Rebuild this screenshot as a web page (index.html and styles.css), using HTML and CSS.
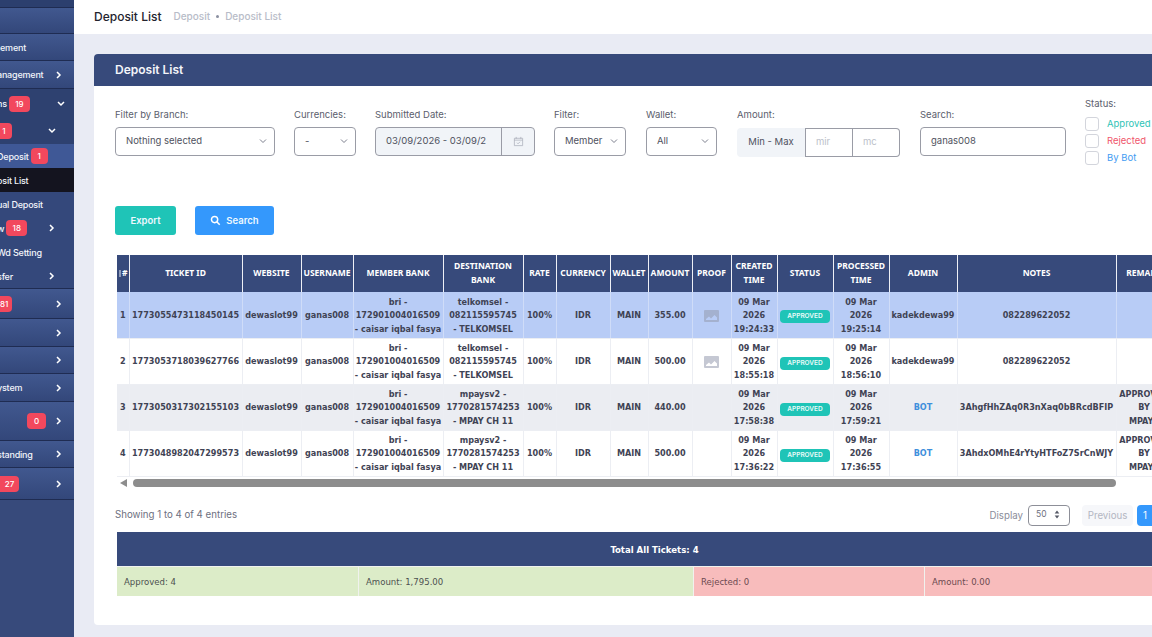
FILE: index.html
```html
<!DOCTYPE html>
<html lang="en">
<head>
<meta charset="utf-8">
<title>Deposit List</title>
<link rel="stylesheet" href="styles.css">
</head>
<body>
<div class="app">
  <aside class="sidebar">
    <div class="nav-cap"></div>
    <a class="nav h26"></a>
    <a class="nav h27"><span class="flush">ement</span></a>
    <a class="nav h28"><span>anagement</span><svg class="chev" viewBox="0 0 8 8"><path d="M2 1l3 3-3 3"/></svg></a>
    <div class="group">
      <a class="nav-sub h29"><span>ns</span><b class="badge">19</b><svg class="chev dn" viewBox="0 0 8 8"><path d="M1 2l3 3 3-3"/></svg></a>
      <a class="nav-sub h26 in"><b class="badge cut">1</b><svg class="chev dn" viewBox="0 0 8 8"><path d="M1 2l3 3 3-3"/></svg></a>
      <a class="nav-sub h24 lit"><span>Deposit</span><b class="badge small">1</b></a>
      <a class="nav-sub h24 black"><span>osit List</span></a>
      <a class="nav-sub h24"><span>ual Deposit</span></a>
      <a class="nav-sub h24 in"><span>w</span><b class="badge">18</b><svg class="chev" viewBox="0 0 8 8"><path d="M2 1l3 3-3 3"/></svg></a>
      <a class="nav-sub h24"><span>Wd Setting</span></a>
      <a class="nav-sub h24 in"><span>sfer</span><svg class="chev" viewBox="0 0 8 8"><path d="M2 1l3 3-3 3"/></svg></a>
    </div>
    <a class="nav h30"><b class="badge cut">81</b><svg class="chev" viewBox="0 0 8 8"><path d="M2 1l3 3-3 3"/></svg></a>
    <a class="nav h28"><svg class="chev" viewBox="0 0 8 8"><path d="M2 1l3 3-3 3"/></svg></a>
    <a class="nav h27"><svg class="chev" viewBox="0 0 8 8"><path d="M2 1l3 3-3 3"/></svg></a>
    <a class="nav h28"><span>ystem</span><svg class="chev" viewBox="0 0 8 8"><path d="M2 1l3 3-3 3"/></svg></a>
    <a class="nav h39"><b class="badge zero">0</b><svg class="chev" viewBox="0 0 8 8"><path d="M2 1l3 3-3 3"/></svg></a>
    <a class="nav h27"><span>standing</span><svg class="chev" viewBox="0 0 8 8"><path d="M2 1l3 3-3 3"/></svg></a>
    <a class="nav h32"><b class="badge cut wide">27</b><svg class="chev" viewBox="0 0 8 8"><path d="M2 1l3 3-3 3"/></svg></a>
    <div class="nav-rest"></div>
  </aside>
  <main class="main">
    <header class="topbar">
      <h1>Deposit List</h1>
      <span class="crumb">Deposit</span><i class="dot"></i><span class="crumb">Deposit List</span>
    </header>
    <section class="card">
      <h2 class="card-head">Deposit List</h2>
      <div class="card-body">
        <div class="filters">
          <div class="field w160">
            <label>Filter by Branch:</label>
            <div class="ctl select"><span>Nothing selected</span><svg class="caret" viewBox="0 0 8 8"><path d="M1 2.5l3 3 3-3"/></svg></div>
          </div>
          <div class="field w62">
            <label>Currencies:</label>
            <div class="ctl select"><span>-</span><svg class="caret" viewBox="0 0 8 8"><path d="M1 2.5l3 3 3-3"/></svg></div>
          </div>
          <div class="field w160">
            <label>Submitted Date:</label>
            <div class="ctl date"><span class="date-val">03/09/2026 - 03/09/2</span><span class="date-ico"><svg viewBox="0 0 12 12"><path d="M1.5 2.5h9v8h-9zM1.5 4.5h9M3.5 1v2M8.5 1v2M4.3 7.3l1.2 1.2 2.2-2.2"/></svg></span></div>
          </div>
          <div class="field w72 wider-gap">
            <label>Filter:</label>
            <div class="ctl select"><span>Member</span><svg class="caret" viewBox="0 0 8 8"><path d="M1 2.5l3 3 3-3"/></svg></div>
          </div>
          <div class="field w71 wider-gap">
            <label>Wallet:</label>
            <div class="ctl select"><span>All</span><svg class="caret" viewBox="0 0 8 8"><path d="M1 2.5l3 3 3-3"/></svg></div>
          </div>
          <div class="field w163 low wider-gap">
            <label>Amount:</label>
            <div class="range"><span class="range-add">Min - Max</span><span class="range-in">mir</span><span class="range-in last">mc</span></div>
          </div>
          <div class="field w146">
            <label>Search:</label>
            <div class="ctl"><span>ganas008</span></div>
          </div>
          <div class="status">
            <label>Status:</label>
            <div class="chk teal"><i></i>Approved</div>
            <div class="chk red"><i></i>Rejected</div>
            <div class="chk blue"><i></i>By Bot</div>
          </div>
        </div>
        <div class="actions">
          <button class="btn export">Export</button>
          <button class="btn search"><svg viewBox="0 0 12 12"><circle cx="5" cy="5" r="3.4"/><path d="M7.6 7.6l3 3"/></svg>Search</button>
        </div>
        <table class="grid">
          <colgroup>
            <col class="c12"><col class="c113"><col class="c59"><col class="c52"><col class="c90"><col class="c80"><col class="c33"><col class="c54"><col class="c38"><col class="c44"><col class="c39"><col class="c46"><col class="c56"><col class="c56"><col class="c68"><col class="c159"><col class="c56">
          </colgroup>
          <thead>
            <tr><th class="idx"><i class="sort"></i>#</th><th>TICKET ID</th><th>WEBSITE</th><th>USERNAME</th><th>MEMBER BANK</th><th>DESTINATION BANK</th><th>RATE</th><th>CURRENCY</th><th>WALLET</th><th>AMOUNT</th><th>PROOF</th><th>CREATED TIME</th><th>STATUS</th><th>PROCESSED TIME</th><th>ADMIN</th><th>NOTES</th><th>REMARK</th></tr>
          </thead>
          <tbody>
            <tr class="sel">
              <td>1</td><td>1773055473118450145</td><td>dewaslot99</td><td>ganas008</td><td>bri - 172901004016509 - caisar iqbal fasya</td><td>telkomsel -<br>082115595745<br>- TELKOMSEL</td><td>100%</td><td>IDR</td><td>MAIN</td><td>355.00</td>
              <td><svg class="pic" viewBox="0 0 15 12"><path d="M1 0h13a1 1 0 0 1 1 1v10a1 1 0 0 1-1 1H1a1 1 0 0 1-1-1V1a1 1 0 0 1 1-1zM2 10h11V7.500L10.500 5 7 8.500 5 6.500 2 9z"/><circle cx="4" cy="3.500" r="1.300"/></svg></td>
              <td>09 Mar 2026 19:24:33</td><td><span class="pill">APPROVED</span></td><td>09 Mar 2026 19:25:14</td><td>kadekdewa99</td><td>082289622052</td><td></td>
            </tr>
            <tr>
              <td>2</td><td>1773053718039627766</td><td>dewaslot99</td><td>ganas008</td><td>bri - 172901004016509 - caisar iqbal fasya</td><td>telkomsel -<br>082115595745<br>- TELKOMSEL</td><td>100%</td><td>IDR</td><td>MAIN</td><td>500.00</td>
              <td><svg class="pic" viewBox="0 0 15 12"><path d="M1 0h13a1 1 0 0 1 1 1v10a1 1 0 0 1-1 1H1a1 1 0 0 1-1-1V1a1 1 0 0 1 1-1zM2 10h11V7.500L10.500 5 7 8.500 5 6.500 2 9z"/><circle cx="4" cy="3.500" r="1.300"/></svg></td>
              <td>09 Mar 2026 18:55:18</td><td><span class="pill">APPROVED</span></td><td>09 Mar 2026 18:56:10</td><td>kadekdewa99</td><td>082289622052</td><td></td>
            </tr>
            <tr class="alt">
              <td>3</td><td>1773050317302155103</td><td>dewaslot99</td><td>ganas008</td><td>bri - 172901004016509 - caisar iqbal fasya</td><td>mpaysv2 -<br>1770281574253<br>- MPAY CH 11</td><td>100%</td><td>IDR</td><td>MAIN</td><td>440.00</td>
              <td></td>
              <td>09 Mar 2026 17:58:38</td><td><span class="pill">APPROVED</span></td><td>09 Mar 2026 17:59:21</td><td class="bot">BOT</td><td>3AhgfHhZAq0R3nXaq0bBRcdBFIP</td><td>APPROVED<br>BY<br>MPAY2</td>
            </tr>
            <tr>
              <td>4</td><td>1773048982047299573</td><td>dewaslot99</td><td>ganas008</td><td>bri - 172901004016509 - caisar iqbal fasya</td><td>mpaysv2 -<br>1770281574253<br>- MPAY CH 11</td><td>100%</td><td>IDR</td><td>MAIN</td><td>500.00</td>
              <td></td>
              <td>09 Mar 2026 17:36:22</td><td><span class="pill">APPROVED</span></td><td>09 Mar 2026 17:36:55</td><td class="bot">BOT</td><td>3AhdxOMhE4rYtyHTFoZ7SrCnWJY</td><td>APPROVED<br>BY<br>MPAY2</td>
            </tr>
          </tbody>
        </table>
        <div class="scroll"><i class="scroll-arrow"></i><i class="scroll-thumb"></i></div>
        <div class="foot">
          <span class="info">Showing 1 to 4 of 4 entries</span>
          <span class="disp">Display</span>
          <span class="disp-sel">50<svg viewBox="0 0 6 10"><path d="M3 .5l2.600 3.500H.4zM3 9.500L.4 6h5.200z"/></svg></span>
          <span class="page-prev">Previous</span>
          <span class="page-cur">1</span>
        </div>
        <div class="summary">
          <div class="sum-head">Total All Tickets: 4</div>
          <div class="sum-row">
            <div class="sum g1">Approved: 4</div>
            <div class="sum g2">Amount: 1,795.00</div>
            <div class="sum r1">Rejected: 0</div>
            <div class="sum r2">Amount: 0.00</div>
          </div>
        </div>
      </div>
    </section>
  </main>
</div>
</body>
</html>
```
FILE: styles.css
```css
* { box-sizing: border-box; }
html, body { margin: 0; height: 637px; overflow: hidden; }
body { font-family: "Inter", "Liberation Sans", sans-serif; font-size: 10px; color: #4a4d5c; background: #e9ebf4; }
.app { display: flex; width: 1152px; height: 637px; overflow: hidden; }

.sidebar { flex: none; width: 74px; height: 637px; display: flex; flex-direction: column; background: #374a7b; color: #fff; font-size: 9px; font-weight: 500; letter-spacing: -.2px; overflow: hidden; }
.nav-cap { height: 8px; background: #2c3f6e; flex: none; border-bottom: 1px solid #1f2c52; }
.nav, .nav-sub { display: flex; align-items: center; flex: none; white-space: nowrap; color: #f2f4fa; overflow: hidden; }
.nav { background: linear-gradient(#41588f, #33477a); border-bottom: 1px solid #1f2c52; }
.nav span, .nav-sub span { flex: none; margin-left: -3px; }
.nav span.flush { margin-left: 0; }
.group { flex: none; background: #2e4170; border-bottom: 1px solid #1f2c52; }
.h24 { height: 24px; }
.h26 { height: 26px; }
.h27 { height: 27px; }
.h28 { height: 28px; }
.h29 { height: 29px; }
.h30 { height: 30px; }
.h32 { height: 32px; }
.h39 { height: 39px; }
.nav-sub { background: #34487b; }
.nav-sub.h29, .nav-sub.h26 { background: #2e4170; }
.nav-sub.lit { background: #3f5896; }
.nav-sub.black { background: #14141f; }
.badge { display: inline-block; flex: none; margin-left: 2px; min-width: 21px; height: 16px; line-height: 16px; padding: 0 6px; border-radius: 4px; background: #f2485d; color: #fff; font-size: 8px; font-weight: 500; letter-spacing: 0; text-align: center; }
.badge.small { min-width: 17px; padding: 0 5px; }
.badge.cut { margin-left: 0; min-width: 12px; padding: 0 4px 0 0; border-radius: 0 4px 4px 0; }
.badge.cut.wide { min-width: 19px; padding: 0; }
.badge.zero { margin-left: 27px; min-width: 19px; }
.chev { margin-left: auto; margin-right: 11px; width: 8px; height: 8px; fill: none; stroke: #fff; stroke-width: 1.5; flex: none; }
.nav-sub .chev { margin-right: 18px; }
.group > .h29 .chev { margin-right: 9px; }
.nav-rest { flex: 1; background: #374a7b; }

.main { flex: 1; min-width: 0; }
.topbar { display: flex; align-items: center; height: 34px; padding: 0 0 2px 20px; background: #fff; }
.topbar h1 { margin: 0 12px 0 0; font-size: 12px; font-weight: 500; color: #23232e; }
.crumb { font-size: 10px; font-weight: 500; color: #b8bcc8; }
.dot { width: 3px; height: 3px; margin: 0 6px; border-radius: 50%; background: #8a8fa0; }

.card { width: 1132px; height: 571px; margin: 20px 0 0 20px; background: #fff; border-radius: 4px; overflow: hidden; }
.card-head { margin: 0; height: 32px; padding-left: 21px; line-height: 32px; background: #374a7b; color: #f4f5fa; font-size: 12px; font-weight: 600; }
.card-body { padding-left: 21px; }

.filters { display: flex; align-items: flex-end; height: 80px; gap: 19px; white-space: nowrap; }
.field { flex: none; margin-bottom: 10px; }
.field.low { margin-bottom: 9px; }
.wider-gap { margin-right: 1px; }
.field label, .status label { display: block; height: 12px; margin-bottom: 6px; line-height: 12px; font-size: 9.5px; color: #5b5e6d; }
.field.low label { margin-bottom: 7px; }
.w160 { width: 160px; }
.w62 { width: 62px; }
.w72 { width: 72px; }
.w71 { width: 71px; }
.w163 { width: 163px; }
.w146 { width: 146px; }
.ctl { display: flex; align-items: center; height: 29px; padding: 0 0 2px 10px; border: 1px solid #9a9ca6; border-radius: 4px; font-size: 9.5px; color: #4f5260; background: #fff; }
.select .caret { margin-left: auto; margin-right: 7px; flex: none; width: 8px; height: 8px; fill: none; stroke: #6d7080; stroke-width: .9; }
.date { padding: 0; background: #f1f4f8; overflow: hidden; }
.date-val { flex: 1; padding: 0 0 2px 10px; overflow: hidden; }
.date-ico { display: flex; align-items: center; justify-content: center; width: 33px; height: 100%; border-left: 1px solid #9a9ca6; }
.date-ico svg { width: 11px; height: 11px; fill: none; stroke: #a9adb8; stroke-width: .8; }
.range { display: flex; height: 29px; font-size: 9.5px; }
.range-add { display: flex; align-items: center; justify-content: center; width: 68px; padding-bottom: 2px; background: #f1f4f8; border-radius: 4px 0 0 4px; color: #4f5260; }
.range-in { display: flex; align-items: center; width: 48px; padding: 0 0 2px 10px; border: 1px solid #9a9ca6; color: #bcbfc9; }
.range-in.last { width: 47px; border-left: 0; border-radius: 0 4px 4px 0; }
.status { flex: none; font-size: 9.5px; }
.status label { margin-bottom: 5px; }
.chk { display: flex; align-items: center; height: 17px; white-space: nowrap; }
.chk i { width: 14px; height: 14px; margin-right: 8px; border: 1px solid #d3d5dc; border-radius: 3px; background: #fff; }
.teal { color: #2fc4b6; }
.red { color: #f0566c; }
.blue { color: #3f9cf2; }

.actions { display: flex; gap: 19px; margin-top: 40px; height: 29px; }
.btn { display: flex; align-items: center; justify-content: center; height: 29px; border: 0; border-radius: 3px; color: #eef8ff; font: 600 9.5px "Inter", sans-serif; }
.export { width: 61px; background: #1fc4b7; }
.search { width: 79px; background: #3498fc; }
.search svg { width: 11px; height: 11px; margin-right: 5px; fill: none; stroke: #fff; stroke-width: 1.6; }

.grid { margin: 20px 0 0 2px; width: 1055px; table-layout: fixed; border-collapse: collapse; font-family: "DejaVu Sans", "Noto Sans", sans-serif; font-stretch: condensed; font-size: 9px; font-weight: 700; color: #3f4354; }
.c12 { width: 12px; } .c113 { width: 113px; } .c59 { width: 59px; } .c52 { width: 52px; } .c90 { width: 90px; } .c80 { width: 80px; } .c33 { width: 33px; } .c54 { width: 54px; } .c38 { width: 38px; } .c44 { width: 44px; } .c39 { width: 39px; } .c46 { width: 46px; } .c56 { width: 56px; } .c68 { width: 68px; } .c159 { width: 159px; }
.grid th { height: 37px; padding: 0 0 2px; background: #374a7b; color: #fff; font-family: "Noto Sans", sans-serif; font-stretch: normal; font-size: 8.5px; line-height: 14px; text-align: center; border-right: 1px solid #eef0f5; overflow: hidden; }
.grid th.idx { white-space: nowrap; text-align: right; padding-right: 1px; }
.sort { display: inline-block; width: 2px; height: 7px; margin-right: 1px; background: #8f9bb8; vertical-align: -1px; }
.grid td { height: 46px; padding: 2px 1px 0; text-align: center; line-height: 13.5px; border-right: 1px solid #eceef3; border-bottom: 1px solid #eceef3; background: #fff; white-space: normal; overflow: hidden; }
.grid .sel td { background: #b8ccf6; border-right-color: #cfdcf8; }
.grid .alt td { background: #ebedf2; }
.grid .bot { color: #3f8fdc; }
.pic { width: 15px; height: 12px; fill: #c5c8d3; fill-rule: evenodd; vertical-align: middle; }
.sel .pic { fill: #a4b1cf; }
.pill { display: inline-block; width: 50px; height: 13px; margin-top: 2px; border-radius: 4px; background: #1fc4b7; color: #e8fbf8; font: 600 6.5px/13px "Inter", sans-serif; vertical-align: middle; }

.scroll { display: flex; align-items: center; gap: 6px; height: 8px; margin: 2px 0 0 5px; }
.scroll-arrow { width: 0; height: 0; border: 4.5px solid transparent; border-right: 7px solid #8d8d8d; border-left: 0; }
.scroll-thumb { width: 983px; height: 8px; border-radius: 4px; background: #8d8d8d; }

.foot { display: flex; align-items: center; width: 1044px; height: 21px; margin-top: 18px; font-size: 9.7px; color: #6d7080; }
.info { flex: 1; margin-bottom: 2px; }
.disp { color: #8a8d9a; margin-right: 5px; }
.disp-sel { display: flex; align-items: center; justify-content: space-between; width: 42px; height: 21px; padding: 0 9px 2px 7px; border: 1px solid #8d8f98; border-radius: 4px; font-size: 8.5px; }
.disp-sel svg { width: 6px; height: 9px; fill: #555966; }
.page-prev { display: flex; align-items: center; justify-content: center; width: 51px; height: 21px; margin-left: 12px; background: #f6f7fa; border-radius: 4px; color: #b3b6c2; }
.page-cur { display: block; width: 22px; height: 21px; margin-left: 4px; padding-left: 6px; line-height: 21px; background: #3498fc; border-radius: 4px 0 0 4px; color: #fff; }

.summary { width: 1075px; margin: 6px 0 0 2px; font-family: "DejaVu Sans", "Noto Sans", sans-serif; font-stretch: condensed; font-size: 9.5px; }
.sum-head { height: 34px; line-height: 35px; text-align: center; background: #374a7b; color: #fff; font-weight: 700; }
.sum-row { display: flex; height: 30px; }
.sum { display: flex; align-items: center; padding-left: 7px; border-right: 1px solid #f0f2ee; color: #4c5150; border-top: 1px solid #f0f2ee; }
.g1 { width: 242px; background: #dcecc8; }
.g2 { width: 335px; background: #dcecc8; }
.r1 { width: 231px; background: #f8bcbc; color: #6c4a50; }
.r2 { width: 267px; background: #f8bcbc; color: #6c4a50; }
```
